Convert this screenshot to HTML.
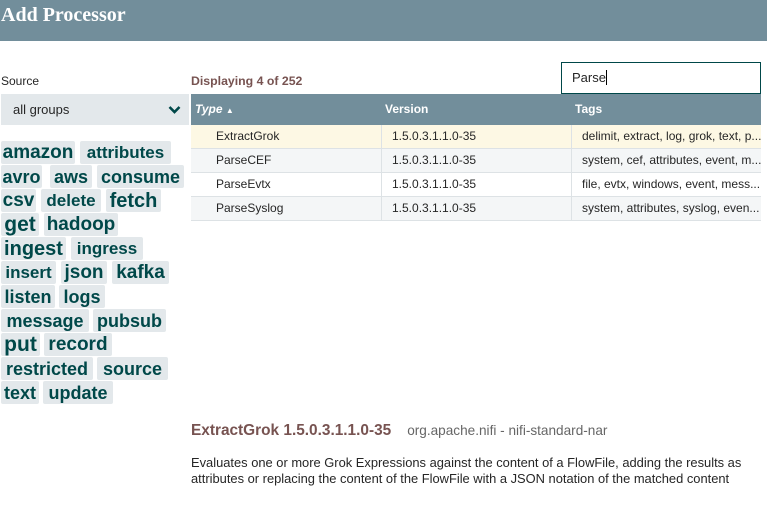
<!DOCTYPE html>
<html><head><meta charset="utf-8"><style>
*{margin:0;padding:0;box-sizing:border-box}
body{width:767px;height:532px;background:#fff;position:relative;overflow:hidden;font-family:"Liberation Sans",sans-serif;color:#262626}
.abs{position:absolute}
.title{left:0;top:0;width:767px;height:41px;background:#728e9b;color:#fff;font-family:"Liberation Serif",serif;font-weight:bold;font-size:20px;padding:4px 0 0 1px}
.tag{position:absolute;height:23px;background:#e3e8eb;color:#004849;font-weight:bold;border-radius:2px;line-height:24px;text-align:center;white-space:nowrap;overflow:visible}
.th{position:absolute;top:94px;height:31px;color:#fff;font-weight:bold;font-size:12px;line-height:31px}
.row{position:absolute;left:191px;width:570px;height:24px;border-bottom:1px solid #dde2e5;font-size:12px;line-height:23px}
.row span{position:absolute;top:0;white-space:nowrap}
.sep{position:absolute;top:0;width:1px;height:24px;background:#dde2e5}
</style></head><body>
<div class="abs title">Add Processor</div>
<div class="abs" style="left:1px;top:74px;font-size:12px;color:#262626">Source</div>
<div class="abs" style="left:1px;top:94px;width:188px;height:31px;background:#e3e8eb;font-size:13px;line-height:31px;padding-left:12px">all groups
<svg class="abs" style="left:167px;top:11px" width="13" height="10" viewBox="0 0 13 10"><path d="M1.5 2 L6.5 7 L11.5 2" stroke="#004849" stroke-width="2.6" fill="none"/></svg></div>

<div class="tag" style="left:1px;top:141px;width:74px;font-size:19px">amazon</div>
<div class="tag" style="left:80px;top:141px;width:91px;font-size:17px">attributes</div>
<div class="tag" style="left:1px;top:165px;width:41px;font-size:18px">avro</div>
<div class="tag" style="left:50px;top:165px;width:42px;font-size:18px">aws</div>
<div class="tag" style="left:97px;top:165px;width:87px;font-size:18px">consume</div>
<div class="tag" style="left:1px;top:189px;width:35px;font-size:19px">csv</div>
<div class="tag" style="left:41px;top:189px;width:60px;font-size:17px">delete</div>
<div class="tag" style="left:106px;top:189px;width:55px;font-size:20px">fetch</div>
<div class="tag" style="left:1px;top:213px;width:38px;font-size:21px">get</div>
<div class="tag" style="left:44px;top:213px;width:74px;font-size:19px">hadoop</div>
<div class="tag" style="left:1px;top:237px;width:65px;font-size:20px">ingest</div>
<div class="tag" style="left:71px;top:237px;width:72px;font-size:17px">ingress</div>
<div class="tag" style="left:1px;top:261px;width:55px;font-size:17px">insert</div>
<div class="tag" style="left:61px;top:261px;width:46px;font-size:19px">json</div>
<div class="tag" style="left:112px;top:261px;width:57px;font-size:19px">kafka</div>
<div class="tag" style="left:1px;top:285px;width:54px;font-size:18px">listen</div>
<div class="tag" style="left:59px;top:285px;width:46px;font-size:18px">logs</div>
<div class="tag" style="left:1px;top:309px;width:88px;font-size:18px">message</div>
<div class="tag" style="left:93px;top:309px;width:73px;font-size:18px">pubsub</div>
<div class="tag" style="left:1px;top:333px;width:39px;font-size:21px">put</div>
<div class="tag" style="left:44px;top:333px;width:68px;font-size:19px">record</div>
<div class="tag" style="left:1px;top:357px;width:92px;font-size:18px">restricted</div>
<div class="tag" style="left:97px;top:357px;width:71px;font-size:18px">source</div>
<div class="tag" style="left:1px;top:381px;width:38px;font-size:18px">text</div>
<div class="tag" style="left:43px;top:381px;width:70px;font-size:18px">update</div>

<div class="abs" style="left:191px;top:74px;font-size:12.3px;font-weight:bold;color:#775351">Displaying 4 of 252</div>
<div class="abs" style="left:561px;top:62px;width:200px;height:32px;border:1px solid #004849;font-size:13px;line-height:29px;padding-left:10px;color:#262626">Parse<span style="display:inline-block;width:1px;height:15px;background:#000;vertical-align:-3px"></span></div>

<div class="abs" style="left:191px;top:94px;width:570px;height:31px;background:#728e9b"></div>
<div class="th" style="left:195px;font-style:italic">Type <span style="font-size:8px;font-style:normal">▲</span></div>
<div class="th" style="left:385px">Version</div>
<div class="th" style="left:575px">Tags</div>

<div class="row" style="top:125px;background:#fdf8e4"><span style="left:25px">ExtractGrok</span><div class="sep" style="left:190px"></div><span style="left:201px">1.5.0.3.1.1.0-35</span><div class="sep" style="left:380px"></div><span style="left:391px">delimit, extract, log, grok, text, p...</span></div>
<div class="row" style="top:149px;background:#f4f6f7"><span style="left:25px">ParseCEF</span><div class="sep" style="left:190px"></div><span style="left:201px">1.5.0.3.1.1.0-35</span><div class="sep" style="left:380px"></div><span style="left:391px">system, cef, attributes, event, m...</span></div>
<div class="row" style="top:173px;background:#fff"><span style="left:25px">ParseEvtx</span><div class="sep" style="left:190px"></div><span style="left:201px">1.5.0.3.1.1.0-35</span><div class="sep" style="left:380px"></div><span style="left:391px">file, evtx, windows, event, mess...</span></div>
<div class="row" style="top:197px;background:#f4f6f7"><span style="left:25px">ParseSyslog</span><div class="sep" style="left:190px"></div><span style="left:201px">1.5.0.3.1.1.0-35</span><div class="sep" style="left:380px"></div><span style="left:391px">system, attributes, syslog, even...</span></div>

<div class="abs" style="left:191px;top:422px;white-space:nowrap"><span style="font-size:15.4px;font-weight:bold;color:#775351">ExtractGrok 1.5.0.3.1.1.0-35</span><span style="font-size:13.6px;color:#666;margin-left:16px">org.apache.nifi - nifi-standard-nar</span></div>
<div class="abs" style="left:191px;top:455px;font-size:12.9px;line-height:16px;color:#262626;white-space:nowrap">Evaluates one or more Grok Expressions against the content of a FlowFile, adding the results as<br>attributes or replacing the content of the FlowFile with a JSON notation of the matched content</div>
</body></html>
